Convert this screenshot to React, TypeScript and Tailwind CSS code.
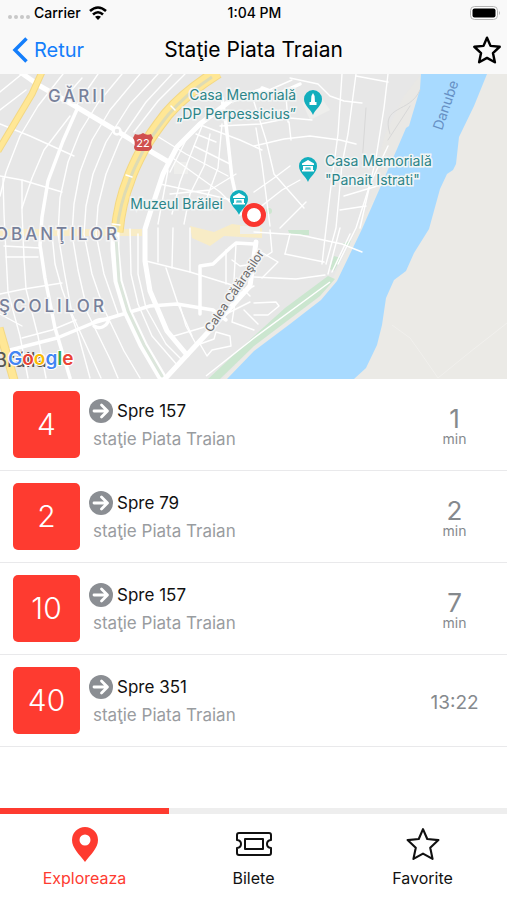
import { useState } from "react";
import { clsx } from "clsx";

type Departure = {
  line: string;
  direction: string;
  stop: string;
  minutes?: number;
  time?: string;
};

const departures: Departure[] = [
  { line: "4", direction: "Spre 157", stop: "staţie Piata Traian", minutes: 1 },
  { line: "2", direction: "Spre 79", stop: "staţie Piata Traian", minutes: 2 },
  { line: "10", direction: "Spre 157", stop: "staţie Piata Traian", minutes: 7 },
  { line: "40", direction: "Spre 351", stop: "staţie Piata Traian", time: "13:22" },
];

// Streets of the map, thin ones first
const minorStreets = [
  "M63 0 L38 32 L20 62 L6 98 L0 122",
  "M82 4 L62 27 M70 42 L44 76 L32 104 L22 134",
  "M98 0 L76 32",
  "M122 0 L98 29 L80 58 L68 88 L60 124 L58 160 L64 196 L72 240 L82 262 L101 304",
  "M140 0 L110 36 L92 66 L80 98 L74 130 L72 160 L78 196 L88 240 L110 285 L118 304",
  "M158 0 L130 30 L106 68 L93 100 L86 132 L84 160 L92 200 L104 235 L124 277 L140 304",
  "M172 0 L146 28 L120 66 L106 100 L98 132 L96 160 L104 200 L118 240",
  "M185 0 L158 27 L134 58",
  "M0 50 L30 62 L74 82",
  "M0 102 L22 106 L62 118",
  "M3 104 L4 140 L6 180 L8 218 L20 262 L28 304",
  "M22 106 L22 138 L24 184 L26 215 L38 262 L46 304",
  "M4 172 L40 174 M6 183 L38 183 M0 220 L24 215 L62 209",
  "M0 240 L22 252 M22 264 L52 256 L76 246",
  "M52 160 L55 190 L62 215 L78 260 L90 304",
  "M0 18 L22 0 M0 36 L26 16",
  "M130 155 L131 200 L138 230 L152 262 L178 292",
  "M138 160 L138 200 L146 234 L166 270 L182 286",
  "M146 187 L190 198 L232 211",
  "M166 194 L178 230 L192 262",
  "M173 154 L172 194 M190 154 L190 198 M158 154 L158 188",
  "M174 262 L208 252 M180 232 L186 252 L196 270",
  "M200 270 L214 265 L216 258 L230 262 L231 272 L212 276 L207 282 L200 270",
  "M157 62 L186 80 L228 102 M174 85 L220 118 L242 140",
  "M160 110 L206 120 L240 128 M168 96 L164 118 L158 150",
  "M186 66 L170 98 M202 52 L194 72 L180 108 L172 140",
  "M194 72 L230 90 M210 60 L204 92 L190 120 L184 150",
  "M222 50 L218 94 L206 126 M236 100 L210 116 L170 120",
  "M198 50 L240 66 L262 76 M196 60 L216 68",
  "M232 26 L260 20 L292 6 M220 52 L260 50 L290 44 L312 46",
  "M254 28 L266 66 L274 100 L304 134",
  "M254 72 L284 65 L310 62 L340 66 L356 70",
  "M254 118 L274 104 L290 92 M254 138 L282 116 L300 106",
  "M256 54 L262 90 L270 152 M280 154 L306 128",
  "M289 48 L291 66 M286 22 L288 48",
  "M342 0 L338 60 L330 120 L322 190 M356 0 L348 60 L342 90 L336 154 L326 190",
  "M290 4 L318 10 L330 22 L344 27 L362 29",
  "M356 2 L388 8 M388 0 L384 34 L376 84 L360 154",
  "M388 72 L370 110 L356 154 L338 190",
  "M344 122 L384 110 M340 136 L366 132",
  "M254 158 L300 161 L342 170 L362 178",
  "M270 156 L272 178 L266 182 M290 160 L285 180 M254 174 L278 188 L262 204",
  "M254 203 L296 205 L325 201 M285 180 L324 188",
  "M254 229 L276 228 L279 232 L268 241 L254 241",
  "M340 154 L328 200 M350 160 L332 198",
  "M232 186 L240 192 L254 190 M226 176 L226 210 M236 170 L234 206 L250 222",
  "M214 246 L226 240 L250 228 M236 222 L232 248 L254 256",
  "M238 220 L254 212 M244 236 L258 250",
];

const mediumStreets = [
  "M78 33 L63 67 L48 107 L42 143 L40 171 L45 204 L55 254 L70 304",
  "M10 276 L57 264 L93 249 L150 232 L177 230 L213 236 L226 246",
  "M200 240 L200 192 L213 190 L230 174 L236 169 L254 170",
  "M93 249 C100 242 106 248 110 244 M94 252 C100 256 106 252 108 248",
  "M262 14 L278 20 L300 10",
  "M222 24 L226 50 L232 104 L240 140",
];

const mainStreets = [
  "M20 -2 L40 12 L75 32 L117 57 L133 67 L167 87",
  "M262 16 L230 27 L200 50 L177 73 L163 100 L152 133 L145 155 L145 187 L150 217 L167 257 L187 281",
  "M163 307 L187 281 L212 254 L250 212 L256 168",
];

function PoiPin({ x, y, monument }: { x: number; y: number; monument?: boolean }) {
  return (
    <g transform={`translate(${x} ${y})`}>
      <path d="M0 15 C-2 9 -9 6 -9 -1 A9 9 0 1 1 9 -1 C9 6 2 9 0 15Z" fill="#12aebd" />
      {monument ? (
        <path d="M0 -7 L1.6 -4 L2 2 H3.5 V5 H-3.5 V2 H-2 L-1.6 -4Z" fill="#fff" />
      ) : (
        <path
          d="M0 -7 L6 -3.5 V-2 H-6 V-3.5Z M-5 -1 H5 V3 H-5Z M-6 3 H6 V4.5 H-6Z M-2.5 0.5 V3 H-1.5 V1.5 H-0.5 V3 H0.5 V1.5 H1.5 V3 H2.5 V0.5Z"
          fill="#fff"
          fillRule="evenodd"
        />
      )}
    </g>
  );
}

function StopMap() {
  return (
    <svg
      viewBox="0 0 507 305"
      preserveAspectRatio="xMidYMid slice"
      className="block h-[305px] w-full"
      role="img"
      aria-label="Harta staţiei Piata Traian"
    >
      <rect width="507" height="305" fill="#e7e7e7" />

      {/* right bank, shore and river */}
      <path d="M424 0 H507 V305 H222 L254 272 L318 224 L333 204 L358 154 L394 76 L404 50 L416 14Z" fill="#ebeae6" />
      <path d="M385 60 L404 22 L421 0 H436 L410 50 L392 90 L366 140Z" fill="#e9e8e5" />
      <path
        d="M421 0 L420 15 L409 52 L406 54 L397 75 L362 155 L337 207 L321 226 L290 250 L254 277 L227 305 H354 L366 294 L377 271 L382 251 L386 224 L394 206 L406 197 L414 179 L429 155 L440 115 L447 100 L453 96 L456 90 L459 63 L474 32 L487 0Z"
        fill="#a8daff"
      />
      <path d="M392 251 L410 264 L420 278 L438 304 L470 278 L507 249" fill="none" stroke="#f1f0ed" strokeWidth="1" />

      {/* parks */}
      <path d="M254 262 L285 234 L328 202 L335 205 L320 222 L254 272 L220 305 H208Z" fill="#cbe6cf" />
      <path d="M288 156 H309 V161 H290Z M334 182 L341 184 L334 197 L330 195Z M342 170 L351 166 L349 172Z" fill="#cbe6cf" />
      <circle cx="269" cy="137" r="3" fill="#cbe6cf" />
      <path d="M206 302 L254 264 L330 208" fill="none" stroke="#fff" strokeWidth="1.5" />

      {/* built-up squares */}
      <path d="M0 155 H142 V162 H0Z M190 152 L214 158 L232 150 L262 154 V164 L224 162 L210 172 L192 164Z" fill="#f8ecc6" />
      <path d="M174 88 H188 V100 H174Z M302 28 L320 22 L330 36 L310 46Z M240 152 H260 V160 H240Z" fill="#eeeeec" />

      <g fill="none" stroke="#fff" strokeLinecap="round" strokeLinejoin="round">
        <path d="M390 60 C380 30 410 40 420 16 M388 66 L410 32 M366 34 L362 90" stroke="#d8d8d8" strokeWidth="1" />
        {minorStreets.map((d) => (
          <path key={d} d={d} strokeWidth="1.4" />
        ))}
        {mediumStreets.map((d) => (
          <path key={d} d={d} strokeWidth="3.5" />
        ))}
        {mainStreets.map((d) => (
          <path key={d} d={d} strokeWidth="5" />
        ))}
        <circle cx="117" cy="57" r="3.5" fill="#e7e7e7" strokeWidth="2.5" />
        <path d="M115 155 L115 175 L118 207 L127 237 L143 271 L163 305" strokeWidth="9" />
        <path d="M116 164 L119 207 L128 237 L144 271 L162 302" stroke="#dce6dc" strokeWidth="3" />

        {/* national roads */}
        <g strokeLinecap="butt">
          <path d="M218 -2 Q186 18 167 40 Q150 62 143 75 Q132 96 129 106 Q120 128 117 158" stroke="#f3d884" strokeWidth="13" />
          <path d="M218 -2 Q186 18 167 40 Q150 62 143 75 Q132 96 129 106 Q120 128 117 158" stroke="#ffe795" strokeWidth="11" />
          <path d="M212 3 Q186 20 168 41 Q150 64 143 77 Q132 98 129 108 Q120 130 117 156" stroke="#dedbb4" strokeWidth="3" />
          <path d="M42 -2 L32 20 L-2 77" stroke="#f3d884" strokeWidth="7" />
          <path d="M42 -2 L32 20 L-2 77" stroke="#ffe795" strokeWidth="5" />
          <path d="M-1 254 L14 306" stroke="#f3d884" strokeWidth="9" />
          <path d="M-1 254 L14 306" stroke="#ffe795" strokeWidth="7" />
        </g>
        <path d="M171 32 L175 36 M126 101 L132 103 M112 150 L120 151" strokeWidth="1.5" />
      </g>

      {/* road shield */}
      <path d="M135 60 Q139 62 143 59 Q147 62 151 60 L153 64 Q150 68 152 73 Q151 77 147 77 H139 Q134 77 134 73 Q136 68 133 64Z" fill="#d0504e" />
      <text x="143" y="73" textAnchor="middle" className="fill-white text-[11px]">22</text>

      {/* districts */}
      <g className="fill-[#77809a] stroke-[#f4f4f4] stroke-3 text-[17px] font-medium tracking-[3px] [paint-order:stroke]">
        <text x="48" y="28">GĂRII</text>
        <text x="-5" y="166">OBANŢILOR</text>
        <text x="-1" y="238">ŞCOLILOR</text>
      </g>

      {/* places */}
      <g className="fill-[#2c8589] stroke-[#f2f5f5] stroke-3 text-[14px] [paint-order:stroke]">
        <text x="296" y="26" textAnchor="end">Casa Memorială</text>
        <text x="296" y="45" textAnchor="end">„DP Perpessicius”</text>
        <text x="325" y="92">Casa Memorială</text>
        <text x="325" y="111">"Panait Istrati"</text>
        <text x="223" y="135" textAnchor="end">Muzeul Brăilei</text>
      </g>
      <text transform="translate(442 57) rotate(-71)" className="fill-[#6690c4] text-[14px]">Danube</text>
      <text
        transform="translate(211 259) rotate(-56)"
        className="fill-[#6a6a6a] stroke-[#f4f4f4] stroke-3 text-[12px] [paint-order:stroke]"
      >
        Calea Călăraşilor
      </text>

      <PoiPin x={313} y={26} monument />
      <PoiPin x={308} y={93} />
      <PoiPin x={239} y={126} />
      <circle cx="254" cy="141" r="9.5" fill="#fff" stroke="#fb3730" strokeWidth="5" />

      <text x="-6" y="293" className="fill-[#555] text-xl">Brăila</text>
      <text x="8" y="291" className="fill-[#4285f4] stroke-white stroke-2 text-[19px] font-semibold [paint-order:stroke]">
        G<tspan className="fill-[#ea4335]">o</tspan>
        <tspan className="fill-[#fbbc05]">o</tspan>
        <tspan>g</tspan>
        <tspan className="fill-[#34a853]">l</tspan>
        <tspan className="fill-[#ea4335]">e</tspan>
      </text>
    </svg>
  );
}

function StarIcon({ className }: { className: string }) {
  return (
    <svg viewBox="0 0 32 32" className={className} fill="none" stroke="currentColor" strokeLinejoin="round">
      <path d="M16 2 L20 11.3 L30.5 12.3 L22.8 19.5 L25 30 L16 25 L7 30 L9.2 19.5 L1.5 12.3 L12 11.3Z" />
    </svg>
  );
}

function PinIcon() {
  return (
    <svg viewBox="0 0 26 35" className="h-[35px] w-[26px]" fill="currentColor">
      <path fillRule="evenodd" d="M13 0 A13 13 0 0 0 0 13 C0 21 7 27 13 35 C19 27 26 21 26 13 A13 13 0 0 0 13 0Z M13 7.5 A5.5 5.5 0 1 1 13 18.5 A5.5 5.5 0 1 1 13 7.5Z" />
    </svg>
  );
}

function TicketIcon() {
  return (
    <svg viewBox="0 0 36 24" className="h-6 w-9" fill="none" stroke="currentColor" strokeWidth="2" strokeLinejoin="round">
      <path d="M3 1 H33 Q35 1 35 3 V8 Q31 8.5 31 12 Q31 15.5 35 16 V21 Q35 23 33 23 H3 Q1 23 1 21 V16 Q5 15.5 5 12 Q5 8.5 1 8 V3 Q1 1 3 1Z" />
      <path d="M9 7 H27 V17 H9Z" />
    </svg>
  );
}

function ArrowBadge() {
  return (
    <svg viewBox="0 0 24 24" className="size-6 shrink-0">
      <circle cx="12" cy="12" r="12" fill="#8b8e93" />
      <path d="M5 12 H18 M12.5 6 L18.5 12 L12.5 18" fill="none" stroke="#fff" strokeWidth="2.8" strokeLinecap="round" strokeLinejoin="round" />
    </svg>
  );
}

function StatusBar() {
  return (
    <div className="grid h-[26px] grid-cols-3 items-center pl-2 pr-1.5 text-sm font-medium">
      <div className="flex items-center gap-1">
        <span className="flex gap-0.5 pt-2">
          {[0, 1, 2, 3].map((dot) => (
            <span key={dot} className="size-1 rounded-full bg-[#c8c8c8]" />
          ))}
        </span>
        <span>Carrier</span>
        <svg viewBox="0 0 18 14" className="ml-1 h-3.5 w-[18px]" fill="none" stroke="currentColor" strokeWidth="2.6">
          <path d="M1 5 Q9 -2 17 5 M4 8.5 Q9 4 14 8.5" />
          <path d="M9 14 L6 10.8 Q9 8.5 12 10.8Z" fill="currentColor" stroke="none" />
        </svg>
      </div>
      <span className="text-center">1:04 PM</span>
      <svg viewBox="0 0 31 14" className="h-3.5 w-[31px] justify-self-end">
        <rect x="0.5" y="0.5" width="27" height="13" rx="4" fill="#fff" stroke="#b5b5b5" />
        <rect x="2.5" y="2.5" width="23" height="9" rx="2" />
        <path d="M29 5 Q31 7 29 9Z" fill="#b5b5b5" />
      </svg>
    </div>
  );
}

function DepartureRow({ departure }: { departure: Departure }) {
  return (
    <li className="flex items-center border-b border-[#e9e9eb] py-3 pl-[13px]">
      <span className="flex size-[67px] shrink-0 items-center justify-center rounded-[5px] bg-[#fe3b30] pb-0.5 text-3xl font-light text-white">
        {departure.line}
      </span>
      <div className="min-w-0 flex-1 pl-[9px]">
        <div className="flex items-center gap-1 text-[17px] leading-6 text-[#111]">
          <ArrowBadge />
          {departure.direction}
        </div>
        <p className="truncate pl-1 pt-1 text-[17px] leading-6 text-[#999ca0]">{departure.stop}</p>
      </div>
      <div className="flex w-[105px] shrink-0 flex-col items-center text-[#85898d]">
        {departure.time ? (
          <span className="pt-1.5 text-[19px]">{departure.time}</span>
        ) : (
          <>
            <span className="pt-1 text-[26px] leading-6">{departure.minutes}</span>
            <span className="text-sm leading-4">min</span>
          </>
        )}
      </div>
    </li>
  );
}

const tabs = [
  { id: "explore", label: "Exploreaza", icon: <PinIcon /> },
  { id: "tickets", label: "Bilete", icon: <TicketIcon /> },
  { id: "favorites", label: "Favorite", icon: <StarIcon className="size-[34px] stroke-2" /> },
];

export default function App() {
  const [activeTab, setActiveTab] = useState("explore");

  return (
    <div className="flex min-h-screen flex-col bg-white font-['Inter',sans-serif] text-black">
      <header className="bg-[#f9f9f9]">
        <StatusBar />
        <div className="grid h-12 grid-cols-[1fr_auto_1fr] items-center px-1.5">
          <button className="flex items-center gap-1.5 justify-self-start pl-1.5 text-xl text-[#147efb]">
            <svg viewBox="0 0 16 26" className="h-[26px] w-4" fill="none" stroke="currentColor" strokeWidth="3.5">
              <path d="M14.5 1.5 L3 13 L14.5 24.5" />
            </svg>
            Retur
          </button>
          <h1 className="text-[21px]">Staţie Piata Traian</h1>
          <button aria-label="Adaugă la favorite" className="justify-self-end">
            <StarIcon className="size-7 stroke-[2.8]" />
          </button>
        </div>
      </header>

      <main className="flex-1">
        <StopMap />
        <ul>
          {departures.map((departure) => (
            <DepartureRow key={departure.line} departure={departure} />
          ))}
        </ul>
      </main>

      <nav className="grid grid-cols-3">
        {tabs.map((tab) => (
          <button
            key={tab.id}
            onClick={() => setActiveTab(tab.id)}
            className={clsx(
              "flex h-[92px] flex-col items-center border-t-6 pt-3",
              tab.id === activeTab ? "border-[#fe3b30] text-[#fe3b30]" : "border-[#eeeeee] text-[#111]"
            )}
          >
            <span className="flex h-9 items-center">{tab.icon}</span>
            <span className="pt-1 text-base leading-6">{tab.label}</span>
          </button>
        ))}
      </nav>
    </div>
  );
}
